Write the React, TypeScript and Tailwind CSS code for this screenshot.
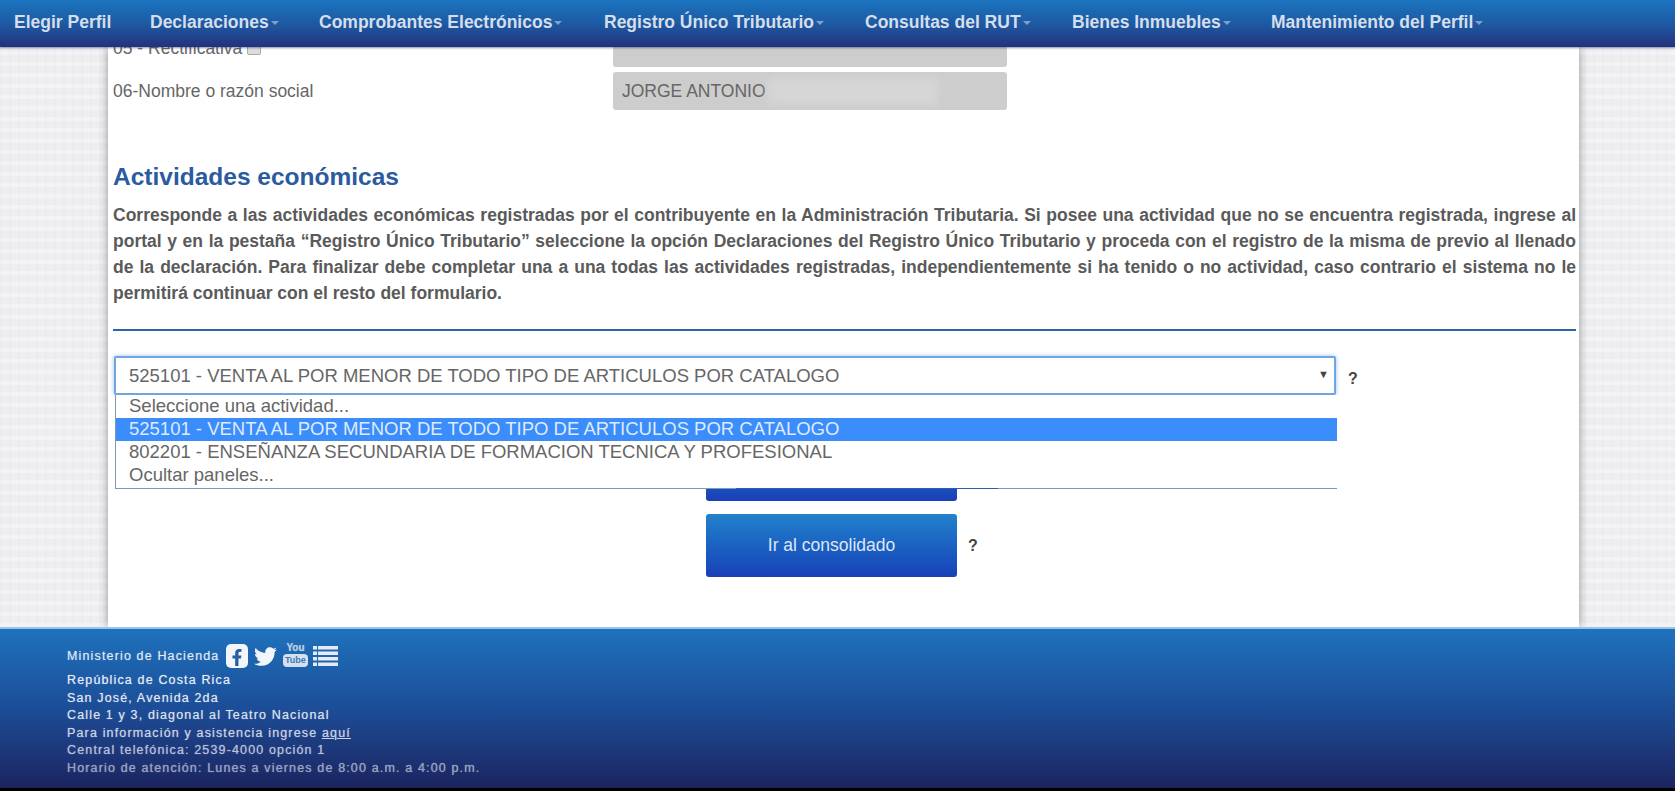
import React from 'react';
import { FaFacebookF, FaTwitter } from 'react-icons/fa';

const menu = [
    { label: 'Elegir Perfil', width: 'w-[136px]', caret: false },
    { label: 'Declaraciones', width: 'w-[169px]', caret: true },
    { label: 'Comprobantes Electrónicos', width: 'w-[285px]', caret: true },
    { label: 'Registro Único Tributario', width: 'w-[261px]', caret: true },
    { label: 'Consultas del RUT', width: 'w-[207px]', caret: true },
    { label: 'Bienes Inmuebles', width: 'w-[199px]', caret: true },
    { label: 'Mantenimiento del Perfil', width: 'w-[300px]', caret: true },
];

const options = [
    { label: 'Seleccione una actividad...', active: false },
    { label: '525101 - VENTA AL POR MENOR DE TODO TIPO DE ARTICULOS POR CATALOGO', active: true },
    { label: '802201 - ENSEÑANZA SECUNDARIA DE FORMACION TECNICA Y PROFESIONAL', active: false },
    { label: 'Ocultar paneles...', active: false },
];

const footerLines = [
    { text: 'República de Costa Rica', color: 'text-[#e6edf6]', link: false },
    { text: 'San José, Avenida 2da', color: 'text-[#e2e8f2]', link: false },
    { text: 'Calle 1 y 3, diagonal al Teatro Nacional', color: 'text-[#dce2ee]', link: false },
    { text: 'Para información y asistencia ingrese', color: 'text-[#ccd3e4]', link: true },
    { text: 'Central telefónica: 2539-4000 opción 1', color: 'text-[#b9c0d8]', link: false },
    { text: 'Horario de atención: Lunes a viernes de 8:00 a.m. a 4:00 p.m.', color: 'text-[#9aa2c2]', link: false },
];

const ActionButton: React.FC<{ label?: string }> = ({ label }) => (
    <div className="ml-[593px] flex items-center">
        <div className="flex h-[63px] w-[251px] items-center justify-center rounded-[3px] bg-gradient-to-b from-[#2481cb] to-[#1a3fb8] text-[17.5px] text-[#dfe7f4]">
            {label}
        </div>
        {label && <span className="ml-[11px] text-[16px] font-bold text-[#444]">?</span>}
    </div>
);

// Four bars with a short segment on the left, as in the footer's list icon
const ListIcon: React.FC = () => (
    <svg className="ml-[7px] h-[22px] w-[25px]" viewBox="0 0 25 22" fill="#e4ebf5">
        {[1, 6.5, 12, 17.5].map((y) => (
            <g key={y}>
                <rect x="0" y={y} width="4" height="3.5" />
                <rect x="5" y={y} width="20" height="3.5" />
            </g>
        ))}
    </svg>
);

const App: React.FC = () => {
    return (
        <div className="flex h-[791px] w-[1675px] flex-col overflow-hidden bg-black font-['Liberation_Sans',Arial,sans-serif]">
            {/* Top menu */}
            <nav className="z-10 flex h-[47px] shrink-0 items-center bg-gradient-to-b from-[#1b74bf] via-[#1c5aa3] to-[#22327d] pb-[2px] pl-[14px] shadow-[0_1px_2px_rgba(60,70,130,0.6)]">
                {menu.map((item) => (
                    <div key={item.label} className={`${item.width} flex shrink-0 items-center`}>
                        <span className="text-[17.5px] font-bold text-[#d5deea]">{item.label}</span>
                        {item.caret && <span className="ml-[2px] mt-[1px] h-0 w-0 border-x-[4px] border-t-[4px] border-x-transparent border-t-[#7fa0c8]"></span>}
                    </div>
                ))}
            </nav>

            {/* Page body with linen background */}
            <main className="h-[580px] shrink-0 overflow-hidden bg-[#eeeef1] bg-[repeating-linear-gradient(0deg,rgba(255,255,255,0.3)_0_4px,transparent_4px_11px),repeating-linear-gradient(90deg,rgba(215,215,222,0.15)_0_2px,transparent_2px_9px)]">
                <div className="ml-[108px] flow-root h-full w-[1471px] bg-white pl-[5px] pr-[3px] shadow-[0_0_9px_rgba(0,0,0,0.4)]">
                    {/* Form rows, scrolled under the menu */}
                    <div className="-mt-[18px] flex h-[38px] items-center">
                        <div className="flex w-[500px] items-center text-[17.5px] text-[#666]">
                            05 - Rectificativa
                            <span className="ml-[5px] h-[14px] w-[14px] rounded-[2px] border border-[#aaa] bg-[#ddd]"></span>
                        </div>
                        <div className="h-[38px] w-[394px] rounded-[3px] bg-[#cdcdcd]"></div>
                    </div>
                    <div className="mt-[5px] flex h-[38px] items-center">
                        <div className="w-[500px] text-[17.5px] text-[#666]">06-Nombre o razón social</div>
                        <div className="relative flex h-[38px] w-[394px] items-center overflow-hidden rounded-[3px] bg-[#cdcdcd] pl-[9px] text-[17.5px] text-[#666]">
                            JORGE ANTONIO
                            <span className="absolute left-[155px] top-[6px] h-[26px] w-[170px] bg-[#d6d6d6] blur-[5px]"></span>
                        </div>
                    </div>

                    <h3 className="mt-[52px] h-[30px] text-[24.5px] font-bold leading-[30px] text-[#2a5a9f]">Actividades económicas</h3>
                    <p className="mt-[10px] text-justify text-[17.5px] font-bold leading-[26px] text-[#5a5a5a]">
                        Corresponde a las actividades económicas registradas por el contribuyente en la Administración Tributaria. Si posee una actividad que no se encuentra registrada, ingrese al portal y en la pestaña “Registro Único Tributario” seleccione la opción Declaraciones del Registro Único Tributario y proceda con el registro de la misma de previo al llenado de la declaración. Para finalizar debe completar una a una todas las actividades registradas, independientemente si ha tenido o no actividad, caso contrario el sistema no le permitirá continuar con el resto del formulario.
                    </p>
                    <div className="mt-[23px] h-[2px] bg-[#2a64a5]"></div>

                    {/* Activity select, shown open */}
                    <div className="relative ml-[1px] mt-[25px] flex items-center">
                        <div className="flex h-[39px] w-[1222px] items-center justify-between rounded-[2px] border-2 border-[#6ea6e0] bg-white pl-[13px] pr-[5px] text-[18.5px] text-[#666] shadow-[0_0_4px_rgba(90,150,220,0.6)]">
                            <span>{options[1].label}</span>
                            <span className="-mt-[2px] text-[11px] text-[#444]">▼</span>
                        </div>
                        <span className="ml-[12px] mt-[7px] text-[16px] font-bold text-[#444]">?</span>
                        <div className="absolute left-[1px] top-[39px] z-10 w-[1222px] border-b border-l border-[#7b9ac0] bg-white pb-[1px]">
                            {options.map((option) => (
                                <div
                                    key={option.label}
                                    className={`h-[23px] pl-[13px] text-[18.5px] leading-[21px] ${option.active ? 'bg-[#3b8dfb] text-[#dfeafc]' : 'text-[#666]'}`}
                                >
                                    {option.label}
                                </div>
                            ))}
                            <span className="absolute -bottom-[1px] left-[620px] h-[1px] w-[262px] bg-[#2a5fb0]"></span>
                        </div>
                    </div>

                    <div className="mt-[43px]">
                        <ActionButton />
                    </div>
                    <div className="mt-[13px]">
                        <ActionButton label="Ir al consolidado" />
                    </div>
                </div>
            </main>

            {/* Footer */}
            <footer className="h-[161px] shrink-0 border-t-2 border-[#9cc4e6] bg-gradient-to-b from-[#1e72bd] via-[#1c4d97] to-[#1a2560] pl-[67px] pt-[14px] text-[12.5px] tracking-[1.15px] [text-shadow:0_0_1px_rgba(255,255,255,0.5)]">
                <div className="flex h-[26px] items-center text-[#dfe8f4]">
                    <span>Ministerio de Hacienda</span>
                    <span className="ml-[7px] flex h-[24px] w-[22px] items-center justify-center rounded-[5px] bg-[#f2f5fa]">
                        <FaFacebookF className="mt-[3px] h-[17px] w-[14px] text-[#2a5f9f]" />
                    </span>
                    <FaTwitter className="ml-[6px] h-[23px] w-[23px] text-[#f2f5fa]" />
                    <div className="ml-[7px] -mt-[2px] flex w-[22px] flex-col items-center leading-none tracking-normal">
                        <span className="text-[10px] font-bold text-[#bccde2]">You</span>
                        <span className="mt-[1px] rounded-[4px] bg-[#d5e0ee] px-[2px] py-[2px] text-[9px] font-bold text-[#3d79b8] [text-shadow:none]">Tube</span>
                    </div>
                    <ListIcon />
                </div>
                <div className="mt-[3px] leading-[17.6px]">
                    {footerLines.map((line) => (
                        <div key={line.text} className={line.color}>
                            {line.text}
                            {line.link && <> <span className="underline">aquí</span></>}
                        </div>
                    ))}
                </div>
            </footer>
        </div>
    );
};

export default App;
